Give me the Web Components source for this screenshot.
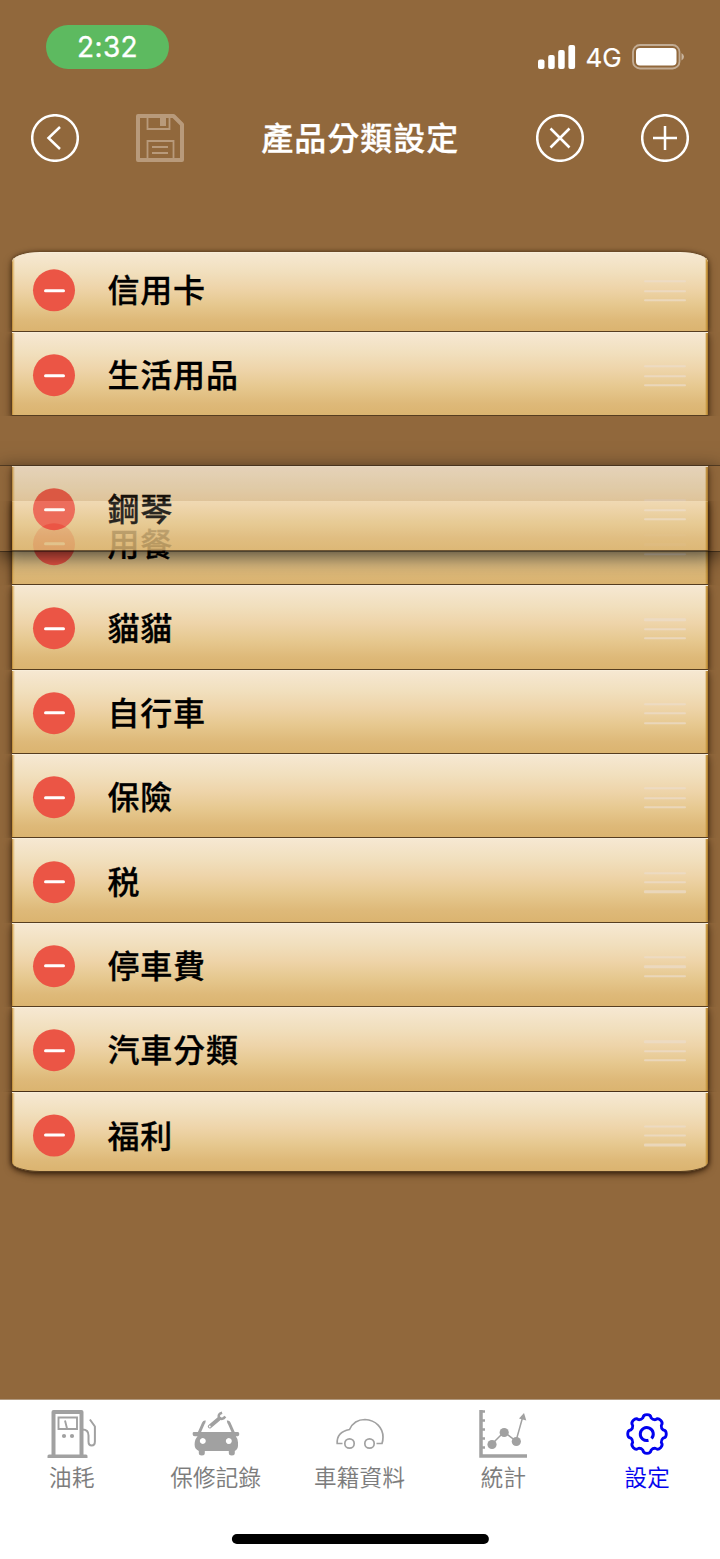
<!DOCTYPE html>
<html lang="zh-Hant">
<head>
<meta charset="utf-8">
<title>產品分類設定</title>
<style>
html,body{margin:0;padding:0;background:#91683c}
body{font-family:"Inter","Noto Sans CJK TC",sans-serif}
</style>
</head>
<body>
<car-app></car-app>
<script>
function define(name, html, setup) {
  const t = document.createElement('template');
  t.innerHTML = html;
  customElements.define(name, class extends HTMLElement {
    constructor() {
      super();
      this.attachShadow({mode: 'open'}).appendChild(t.content.cloneNode(true));
    }
    connectedCallback() { if (setup) setup(this, this.shadowRoot); }
  });
}

define('status-bar', `
<style>
:host{display:flex;height:90px;box-sizing:border-box;padding:25px 35.500px 0 46px;justify-content:space-between;align-items:flex-start;color:#fff}
.time{width:123px;height:44px;border-radius:22px;background:#5dba60;display:flex;align-items:center;justify-content:center;font-size:28px;font-weight:400;letter-spacing:.4px;-webkit-text-stroke:.3px currentColor}
.right{display:flex;align-items:center;gap:10px;height:32px;margin-top:16px}
.net{font-size:26px;letter-spacing:-.1px;line-height:32px;margin-top:2px;-webkit-text-stroke:.2px currentColor}
svg{display:block}
</style>
<div class="time">2:32</div>
<div class="right">
<svg width="38" height="24" viewBox="0 0 38 24" fill="#fff"><rect x="0" y="14.5" width="6.5" height="9.5" rx="2"/><rect x="10.200" y="10" width="6.5" height="14" rx="2"/><rect x="20.200" y="5" width="6.5" height="19" rx="2"/><rect x="30.400" y="0" width="6.7" height="24" rx="2"/></svg>
<span class="net">4G</span>
<svg width="53" height="26" viewBox="0 0 53 26"><rect x="1" y="1" width="46.500" height="23.5" rx="7" fill="none" stroke="#fff" stroke-opacity=".45" stroke-width="1.8"/><rect x="4" y="4" width="40.500" height="17.5" rx="4" fill="#fff"/><path d="M49.5 9q5 3.700 0 7.500z" fill="#fff" fill-opacity=".5"/></svg>
</div>`);

define('round-button', `
<style>:host{display:block;width:48px;height:48px}svg{display:block}</style>
<svg width="48" height="48" viewBox="0 0 48 48" fill="none" stroke="#fff" stroke-width="2.500"><circle cx="24" cy="24" r="22.800"/><path/></svg>`,
(h, r) => r.querySelector('path').setAttribute('d', {
  back: 'M29 13 17.500 24 29 35', close: 'M14.500 14.500 33.500 33.500M33.500 14.500 14.500 33.500', add: 'M24 12V36M12 24H36'
}[h.getAttribute('kind')]));

define('nav-header', `
<style>
:host{display:grid;grid-template-columns:48px 48px 1fr 48px 48px;column-gap:57.500px;padding:24px 31px 0 30.500px;align-items:center;height:48px;color:#fff}
h1{margin:-4px -41px 0 -40px;text-align:center;white-space:nowrap;font:500 32px/48px "Noto Sans CJK TC",sans-serif;letter-spacing:1px;-webkit-text-stroke:.3px currentColor}
svg{display:block}
</style>
<round-button kind="back"></round-button>
<svg width="48" height="48" viewBox="0 0 48 48" fill="none" stroke="#b89a7b"><path d="M2 2H37.500L46 10.500V46H2z" stroke-width="4" stroke-linejoin="round"/><path d="M11.500 3V15H33.500V3M11.500 45V27H37.500V45" stroke-width="1.800"/><path d="M16 33H32M16 39H32" stroke-width="2"/><path d="M24 4h6v8h-6z" fill="#b89a7b" stroke="none"/></svg>
<h1><slot></slot></h1>
<round-button kind="close"></round-button>
<round-button kind="add"></round-button>`);

define('category-row', `
<style>
:host{display:flow-root;height:84.420px;position:relative;overflow:clip}
.panel{position:relative;height:100%;box-sizing:border-box;margin:0 12px 0 11.500px;padding:0 22.500px 0 21.500px;display:flex;align-items:center;
background:linear-gradient(90deg,#b9842f 0,#d9ab58aa 1.200px,#d9ab5800 3px,#d9ab5800 calc(100% - 3px),#c99a45 calc(100% - 1.500px),#a9782c 100%),linear-gradient(#f6e8d2 0,#f1dfbd 25%,#eed4a9 45%,#e6c88f 66%,#deb979 86%,#dbb470 100%);
border-top:1px solid #f8edd9;border-bottom:1.500px solid #563d20;box-shadow:0 0 4px #2a1808cc,0 4px 9px 1px #3a220c99}
.content{display:flex;align-items:center;width:100%;height:100%;transform:translateY(1.200px)}
:host([edge=first]) .panel{margin-top:4.800px;height:79.620px;border-radius:28px 28px 0 0 / 10px 10px 0 0;box-shadow:0 0 4px #2a1808bb,0 4px 9px #3a220c99}
:host([edge=first]) .content{transform:translateY(-1.700px)}
:host([edge=first]){overflow:visible;clip-path:inset(-4px 0 0 0)}
:host([edge=last]) .panel{height:80px;border-radius:0 0 28px 28px / 0 0 10px 10px;box-shadow:0 0 4px 1px #2a1808cc,0 2px 7px 1px #3a220c99}
:host([edge=last]) .content{transform:translateY(3.500px)}
:host([edge=last]){clip-path:inset(0 0 -8px 0);overflow:visible}
.minus{width:42px;height:42px;border-radius:50%;background:#eb5545;display:grid;place-items:center;margin-right:32.500px}
.minus i{width:21px;height:3px;border-radius:1.500px;background:#fff}
.label{flex:1;margin-top:-4px;font:500 32px/48px "Noto Sans CJK TC",sans-serif;letter-spacing:.8px;color:#000;-webkit-text-stroke:.3px currentColor}
.grip{display:grid;gap:7.200px;width:42px;margin-top:1px}
.grip i{height:2.200px;background:#ebdccb;opacity:.72;border-radius:1px}
</style>
<div class="panel"><div class="content"><span class="minus"><i></i></span><span class="label"><slot></slot></span><span class="grip"><i></i><i></i><i></i></span></div></div>`);

define('category-list', `
<style>
:host{display:block;position:relative;margin-top:85.500px}
.gap{height:84.420px}
/* the lifted row is translucent and floats over the list while it is dragged */
.drag{position:absolute;left:0;right:0;top:218.500px;height:84.500px;box-shadow:0 0 0 1px #0000005c,0 5px 20px 0 #000000b8}
.drag category-row{height:100%;opacity:.83}
</style>
<slot name="before"></slot><div class="gap"></div><slot name="after"></slot>
<div class="drag"><category-row><slot name="lifted"></slot></category-row></div>`);

const art = {
fuel:`<g transform="translate(-.500 0)"><path d="M6 45V2H34V45" stroke-width="4" stroke-linejoin="round"/><path d="M11 7.500H29.500V19H11zM17.500 10.500l2 8" stroke-width="1.900"/><path d="M35 19.500q6 0 6 6v6q0 4 3.200 4t3.200-4V16.500l-5-7" stroke-width="2"/><g fill="currentColor" stroke="none"><circle cx="16.500" cy="26" r="2.100"/><circle cx="24.500" cy="26" r="2.100"/><path d="M0 46q0-1.500 1.500-1.500h37q1.500 0 1.500 1.500v2H0z"/></g></g>`,
repair:`<g transform="translate(-.200 .500)"><g fill="currentColor" stroke="none"><path fill-rule="evenodd" d="M2 21.500h44q1.500 0 1.500 2t-1.500 2.200h-2q2.200 2.500 2.200 6.300v3q0 3.500-3.200 5.500v2q0 2.500-3 2.500t-3-2.500V40.500H13v2q0 2.500-3 2.500t-3-2.500v-2q-4.200-2-4.200-6.500 0-5.300 3-8.300H3q-2.200 0-2.200-2.200t1.200-2zM11 27.500a3 3 0 1 0 .01 0zM37 27.500a3 3 0 1 0 .01 0z"/></g><path d="M7.500 22l4.200-9.500q.600-1.300 2-1M41.500 22l-4.200-9.500q-.600-1.300-2-1" stroke-width="3"/><path d="M18 16 27.500 8" stroke-width="4" stroke-linecap="round"/><path d="M30.300 2.300Q25.800 3.500 27.300 7.300 30.500 10 33.500 6" stroke-width="2.600"/><circle cx="18" cy="16" r=".9" fill="#fff" stroke="none"/></g>`,
car:`<path d="M6.500 33.500H1.200Q.500 22 13.500 19.500C17 12 22 9.500 29 9.500 40 10 47 18 47 27q0 4-1 6.500H40.500" stroke-width="1.700"/><circle cx="13.500" cy="33.500" r="4.700" stroke-width="1.700"/><circle cx="33.500" cy="33.500" r="4.700" stroke-width="1.700"/>`,
stats:`<path d="M2 0V46H48" stroke-width="3.500"/><path d="M2 1.500H6M2 10.500H6M2 19.500H6M2 28.500H6M2 37.500H6" stroke-width="2.500"/><path d="M13 34 25 22 37 31 44 6" stroke-width="1.500"/><g fill="currentColor" stroke="none"><circle cx="13" cy="34.500" r="4.600"/><circle cx="25.200" cy="22.500" r="4.600"/><circle cx="37.300" cy="31.500" r="4.600"/><path d="M45 3 47.300 10.500 40 8.500z"/></g>`,
gear:`<path id="gear" stroke-width="2.800" stroke-linejoin="round"/><path d="M28.500 28.500A6.500 6.500 0 1 0 25.500 30.300" stroke-width="3"/>`
};
define('tab-item', `
<style>
:host{display:flex;flex-direction:column;align-items:center;color:#a1a1a1}
:host([active]){color:#0202ee}
svg{display:block;width:48px;height:48px;margin-top:10px;overflow:visible}
span{font:350 22.500px/33px "Noto Sans CJK TC DemiLight","Noto Sans CJK TC",sans-serif;color:#7c7c7c;margin-top:2px;white-space:nowrap;letter-spacing:.3px;-webkit-text-stroke:.1px currentColor}
:host([active]) span{color:#0202ee}
</style>
<svg viewBox="0 0 48 48" fill="none" stroke="currentColor"></svg><span><slot></slot></span>`,
(h, r) => {
  r.querySelector('svg').innerHTML = art[h.getAttribute('icon')];
  const g = r.querySelector('#gear');
  if (g) {
    let d = '';
    for (let i = 0; i < 8; i++) {
      const a = i * Math.PI / 4 - Math.PI / 2;
      const p = (rad, off) => (24 + rad * Math.cos(a + off)).toFixed(2) + ' ' + (24 + rad * Math.sin(a + off)).toFixed(2);
      d += (i ? 'L' : 'M') + p(16.6, -.25) + 'C' + p(20.7, -.18) + ' ' + p(20.7, .18) + ' ' + p(16.6, .25);
      d += 'Q' + p(15.200, Math.PI / 8) + ' ' + p(16.6, Math.PI / 4 - .25);
    }
    g.setAttribute('d', d + 'Z');
  }
});

define('tab-bar', `
<style>
:host{display:grid;grid-template-columns:repeat(5,1fr);grid-template-rows:134.500px auto;height:159.500px;background:#fff;box-shadow:0 -1px #b19a80;padding-right:.800px}
.home{grid-column:1/-1;justify-self:center;width:257px;height:9.500px;border-radius:5px;background:#000;transform:translateX(.900px)}
</style>
<tab-item icon="fuel">油耗</tab-item><tab-item icon="repair">保修記錄</tab-item><tab-item icon="car">車籍資料</tab-item><tab-item icon="stats">統計</tab-item><tab-item icon="gear" active>設定</tab-item>
<div class="home"></div>`);

define('car-app', `
<style>
:host{display:flex;flex-direction:column;width:720px;height:1559px;background:#91683c;overflow:hidden}
tab-bar{margin-top:auto}
</style>
<status-bar></status-bar>
<nav-header>產品分類設定</nav-header>
<category-list>
<category-row slot="before" edge="first">信用卡</category-row>
<category-row slot="before">生活用品</category-row>
<category-row slot="after">用餐</category-row>
<category-row slot="after">貓貓</category-row>
<category-row slot="after">自行車</category-row>
<category-row slot="after">保險</category-row>
<category-row slot="after">税</category-row>
<category-row slot="after">停車費</category-row>
<category-row slot="after">汽車分類</category-row>
<category-row slot="after" edge="last">福利</category-row>
<span slot="lifted">鋼琴</span>
</category-list>
<tab-bar></tab-bar>`);
</script>
</body>
</html>
